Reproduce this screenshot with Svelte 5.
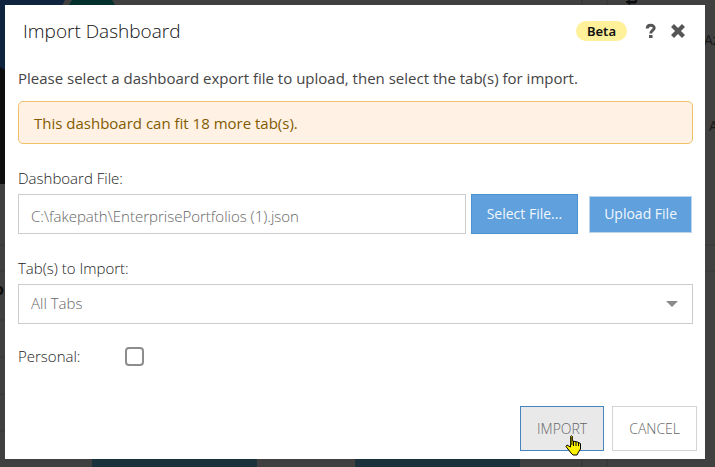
<script lang="ts">
    let fileName = $state("C:\\fakepath\\EnterprisePortfolios (1).json");
    let selectedTab = $state("All Tabs");
    let personal = $state(false);
    let tabsLeft = 18;
    let open = $state(true);

    const tabs = ["All Tabs"];

    function closeDialog() {
        open = false;
    }

    function importTabs() {
        console.log("Importing", { fileName, selectedTab, personal });
    }
</script>

<div class="page">
    <!-- Dashboard behind the dialog, already dimmed -->
    <svg class="backdrop" viewBox="0 0 715 467" preserveAspectRatio="xMinYMin slice" aria-hidden="true">
        <rect width="715" height="467" fill="#404040" />
        <path d="M0 0H65L5 110H0Z" fill="#10233f" />
        <path d="M0 67L5 70V184H0Z" fill="#0e0e0e" />
        <path d="M72 0H112L118 10H66Z" fill="#02302d" />
        <path d="M0 245H5M0 271H5M0 320H5M0 357H5M0 394H5M0 431H5M705 245H715M705 271H715" stroke="#373737" />
        <path d="M582 0V467M607 0V467" stroke="#3a3a3a" stroke-width="2" />
        <rect x="92" y="455" width="165" height="12" fill="#1b323d" />
        <rect x="355" y="455" width="165" height="12" fill="#1b323d" />
        <text class="back-bold" x="-6" y="295">ol</text>
        <text class="back-bold" transform="translate(637 5) rotate(-90)">t</text>
        <text class="back-text" x="704" y="45">Az</text>
        <text class="back-text" x="709" y="131">A</text>
    </svg>

    {#if open}
        <div class="dialog" role="dialog" aria-labelledby="dialog-title">
            <header>
                <h1 id="dialog-title">Import Dashboard</h1>
                <span class="beta">Beta</span>
                <button class="icon-btn" type="button" aria-label="Help">
                    <svg width="12" height="16" viewBox="0 0 12 16">
                        <path d="M2.200 5.500C2.200 1.200 9.200 1.200 9.200 5C9.200 7.500 5.700 7.300 5.700 10.500" fill="none" stroke="#555" stroke-width="3" />
                        <rect x="4" y="12" width="3.500" height="3" fill="#555" />
                    </svg>
                </button>
                <button class="icon-btn" type="button" aria-label="Close" onclick={closeDialog}>
                    <svg width="14" height="14" viewBox="0 0 14 14">
                        <path d="M3 3L11 11M11 3L3 11" stroke="#555" stroke-width="4.200" stroke-linecap="square" />
                    </svg>
                </button>
            </header>

            <form onsubmit={(e) => e.preventDefault()}>
                <p class="intro">Please select a dashboard export file to upload, then select the tab(s) for import.</p>
                <div class="alert">This dashboard can fit {tabsLeft} more tab(s).</div>

                <div class="field">
                    <label for="file">Dashboard File:</label>
                    <div class="file-row">
                        <input id="file" type="text" bind:value={fileName} />
                        <button class="blue" type="button">Select File...</button>
                        <button class="blue upload" type="button">Upload File</button>
                    </div>
                </div>

                <div class="field">
                    <label for="tabs">Tab(s) to Import:</label>
                    <div class="select-wrap">
                        <select id="tabs" bind:value={selectedTab}>
                            {#each tabs as tab}
                                <option>{tab}</option>
                            {/each}
                        </select>
                        <svg class="arrow" width="12" height="6" viewBox="0 0 12 6">
                            <path d="M0 0H12L6 6Z" fill="#8a8a8a" />
                        </svg>
                    </div>
                </div>

                <div class="check-row">
                    <label for="personal">Personal:</label>
                    <input id="personal" type="checkbox" bind:checked={personal} />
                </div>
            </form>

            <footer>
                <button class="action active" type="button" onclick={importTabs}>
                    IMPORT
                    <svg class="hand" width="17" height="21" viewBox="0 0 17 21">
                        <path d="M5.500 1.500Q6.500 0 7.500 1.500V6L10 6.500L12.500 7L15.500 8.500V14L13.500 17L12 20H8L6 18L1 11.500L2 10L5.500 12Z" fill="#fff200" stroke="#000" />
                        <path d="M6.500 2V10" stroke="#6b6400" stroke-width="2" />
                        <path d="M8.500 6V11M11 7V11M13.500 8V11" stroke="#000" stroke-width="1" />
                    </svg>
                </button>
                <button class="action" type="button" onclick={closeDialog}>CANCEL</button>
            </footer>
        </div>
    {/if}
</div>

<style>
    :global(body) {
        background: #404040;
    }

    .page {
        position: relative;
        min-height: 100vh;
        box-sizing: border-box;
        padding: 5px 10px 8px 5px;
        overflow: hidden;
        font-family: "Open Sans", "Noto Sans", sans-serif;
        font-size: 15px;
        line-height: 20px;
        color: #444;
    }

    .backdrop {
        position: absolute;
        top: 0;
        left: 0;
        width: 100%;
        height: 100%;
    }

    .back-bold {
        font-size: 16px;
        font-weight: 700;
        fill: #0c0c0c;
    }

    .back-text {
        font-size: 14px;
        fill: #171717;
    }

    .dialog {
        position: relative;
        background: #fff;
    }

    header {
        display: flex;
        align-items: center;
        height: 52px;
        padding: 0 20px 0 18px;
    }

    h1 {
        flex: 1;
        margin: 0;
        font-size: 19px;
        font-weight: 350;
        color: #111;
    }

    .beta {
        padding: 0 11px;
        margin-right: 16px;
        border-radius: 10px;
        background: #fff09a;
        color: #111;
        font-family: "Noto Sans", sans-serif;
        font-size: 13px;
        font-weight: 600;
    }

    .icon-btn {
        display: flex;
        padding: 0;
        margin-left: 2px;
        border: none;
        background: none;
        cursor: pointer;
    }

    .icon-btn + .icon-btn {
        margin-left: 14px;
    }

    form {
        padding: 11px 12px 0 13px;
    }

    .intro {
        margin: 0 0 13px;
    }

    .alert {
        padding: 11px 15px 10px;
        border: 1px solid #efc068;
        border-radius: 5px;
        background: #fff2e4;
        color: #845a00;
    }

    .field {
        margin-top: 24px;
    }

    label {
        display: block;
        font-weight: 300;
        color: #222;
    }

    .file-row,
    .select-wrap {
        position: relative;
        display: flex;
        align-items: center;
        margin-top: 6px;
    }

    input[type="text"],
    select {
        flex: 1;
        min-width: 0;
        height: 40px;
        box-sizing: border-box;
        padding: 4px 12px 0;
        border: 1px solid #ccc;
        border-radius: 0;
        background: #fff;
        color: #666;
        font: inherit;
        font-weight: 350;
    }

    select {
        appearance: none;
        padding: 0 12px 2px;
    }

    .arrow {
        position: absolute;
        right: 15px;
        pointer-events: none;
    }

    button {
        font: inherit;
        font-size: 14px;
    }

    .blue {
        height: 40px;
        margin-left: 5px;
        padding: 0 15px;
        border: 1px solid #4d92d0;
        background: #5fa0dd;
        color: #f2f7fc;
        cursor: pointer;
    }

    .upload {
        height: 37px;
        margin: 0 1px 0 11px;
        padding: 0 14px;
        border: 1px solid #bcd5ee;
    }

    .check-row {
        display: flex;
        align-items: center;
        margin-top: 22px;
    }

    .check-row label {
        width: 107px;
    }

    input[type="checkbox"] {
        appearance: none;
        width: 19px;
        height: 19px;
        margin: 0;
        border: 2px solid #8d8d8d;
        border-radius: 4px;
        background: #fff;
    }

    input[type="checkbox"]:checked {
        background: #5fa0dd;
    }

    footer {
        display: flex;
        justify-content: flex-end;
        gap: 8px;
        padding: 40px 8px 8px;
    }

    .action {
        position: relative;
        height: 45px;
        padding: 0 16px;
        border: 1px solid #d4d4d4;
        background: #fff;
        color: #666;
        font-weight: 300;
        cursor: pointer;
    }

    .active {
        border-color: #4685bd;
        background: #e9e9e9;
    }

    .hand {
        position: absolute;
        left: 44px;
        top: 28px;
    }
</style>
